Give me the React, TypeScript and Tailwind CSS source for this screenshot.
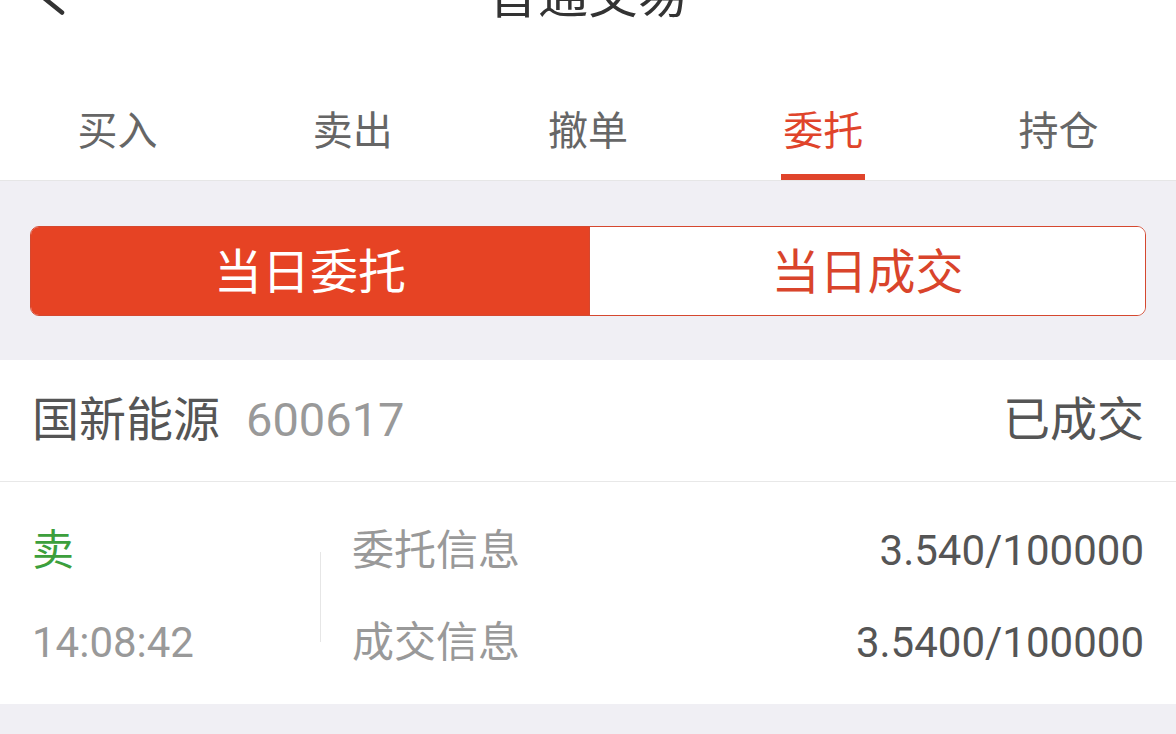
export default function App() {
  const tabs = ["买入", "卖出", "撤单", "委托", "持仓"];
  const font = { fontFamily: 'Roboto, "Noto Sans CJK SC", sans-serif' };
  return (
    <div className="w-[1176px] h-[734px] overflow-hidden bg-[#f0eff4]" style={font}>
      {/* header */}
      <div className="bg-white h-[80px] grid grid-cols-[1fr_auto_1fr] items-start">
        <div className="pl-[40px]">
          <svg width="30" height="20" viewBox="0 0 30 20" className="block">
            <line x1="4" y1="-2" x2="22" y2="12.5" stroke="#333" strokeWidth="4.5" strokeLinecap="round" />
          </svg>
        </div>
        <div className="-mt-[29px] text-[50px] leading-[50px] text-[#333]">普通交易</div>
        <div />
      </div>
      {/* tabs */}
      <div className="bg-white h-[101px] grid grid-cols-5 border-b border-[#e6e6e6]">
        {tabs.map((t) => {
          const active = t === "委托";
          return (
            <div key={t} className="flex flex-col items-center justify-end">
              <div className={`text-[40px] leading-[40px] ${active ? "text-[#e0442b]" : "text-[#666]"}`}>{t}</div>
              <div className={`mt-[22px] h-[6px] w-[84px] ${active ? "bg-[#e0442b]" : "bg-transparent"}`} />
            </div>
          );
        })}
      </div>
      {/* segmented */}
      <div className="px-[30px] pt-[45px] pb-[44px]">
        <div className="flex h-[90px] rounded-[9px] border border-[#d5482f] overflow-hidden">
          <div className="w-[559px] bg-[#e64324] flex items-center justify-center pt-[3px] text-white text-[48px] leading-none border-r border-[#d5482f]">
            当日委托
          </div>
          <div className="flex-1 bg-white flex items-center justify-center pt-[3px] text-[#d9442b] text-[48px] leading-none">
            当日成交
          </div>
        </div>
      </div>
      {/* card */}
      <div className="bg-white">
        <div className="h-[122px] px-[32px] flex items-center justify-between border-b border-[#e8e8e8]">
          <div className="flex items-center">
            <span className="text-[47px] text-[#555]">国新能源</span>
            <span className="ml-[26px] text-[47px] text-[#999]">600617</span>
          </div>
          <span className="text-[47px] text-[#555]">已成交</span>
        </div>
        <div className="h-[222px] px-[32px] pt-[8px] flex items-center">
          <div className="w-[288px] flex flex-col gap-[46px]">
            <div className="text-[42px] leading-[46px] text-[#3c9f3c]">卖</div>
            <div className="text-[42px] leading-[46px] text-[#999]">14:08:42</div>
          </div>
          <div className="w-px h-[90px] bg-[#e6e6e6]" />
          <div className="flex-1 pl-[31px] flex flex-col gap-[46px]">
            <div className="flex justify-between text-[42px] leading-[46px]">
              <span className="text-[#999]">委托信息</span>
              <span className="text-[#555]">3.540/100000</span>
            </div>
            <div className="flex justify-between text-[42px] leading-[46px]">
              <span className="text-[#999]">成交信息</span>
              <span className="text-[#555]">3.5400/100000</span>
            </div>
          </div>
        </div>
      </div>
    </div>
  );
}
